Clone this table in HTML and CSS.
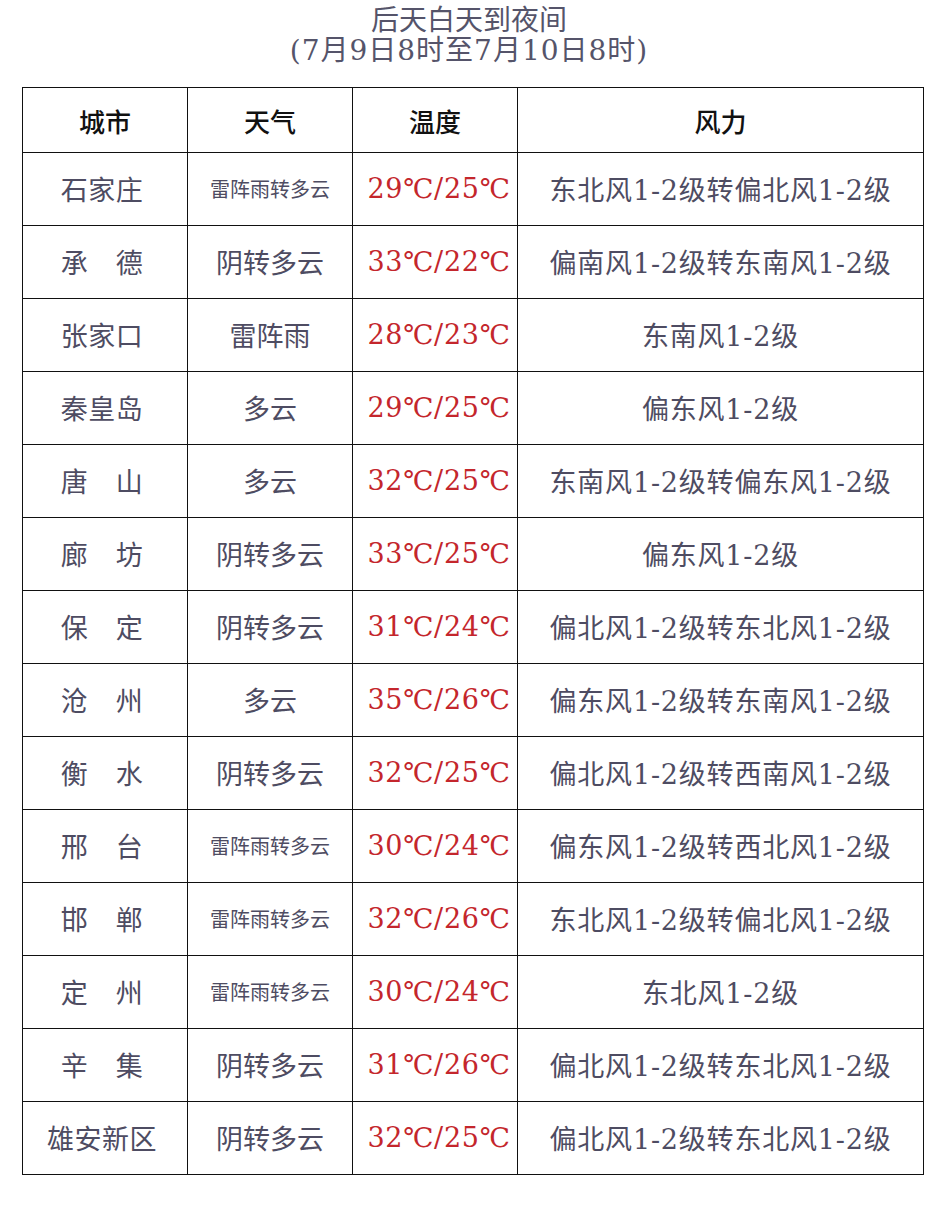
FILE: index.html
```html
<!DOCTYPE html>
<html lang="zh">
<head>
<meta charset="utf-8">
<link rel="stylesheet" href="styles.css">
</head>
<body>
<div class="title">
  <div class="t1">后天白天到夜间</div>
  <div class="t2">(7月9日8时至7月10日8时)</div>
</div>
<table class="wx">
  <colgroup><col class="c1"><col class="c2"><col class="c3"><col class="c4"></colgroup>
  <thead>
    <tr><th>城市</th><th>天气</th><th>温度</th><th>风力</th></tr>
  </thead>
  <tbody>
    <tr><td class="city">石家庄</td><td class="sm">雷阵雨转多云</td><td class="temp">29℃/25℃</td><td class="wind">东北风1-2级转偏北风1-2级</td></tr>
    <tr><td class="city">承　德</td><td>阴转多云</td><td class="temp">33℃/22℃</td><td class="wind">偏南风1-2级转东南风1-2级</td></tr>
    <tr><td class="city">张家口</td><td>雷阵雨</td><td class="temp">28℃/23℃</td><td class="wind">东南风1-2级</td></tr>
    <tr><td class="city">秦皇岛</td><td>多云</td><td class="temp">29℃/25℃</td><td class="wind">偏东风1-2级</td></tr>
    <tr><td class="city">唐　山</td><td>多云</td><td class="temp">32℃/25℃</td><td class="wind">东南风1-2级转偏东风1-2级</td></tr>
    <tr><td class="city">廊　坊</td><td>阴转多云</td><td class="temp">33℃/25℃</td><td class="wind">偏东风1-2级</td></tr>
    <tr><td class="city">保　定</td><td>阴转多云</td><td class="temp">31℃/24℃</td><td class="wind">偏北风1-2级转东北风1-2级</td></tr>
    <tr><td class="city">沧　州</td><td>多云</td><td class="temp">35℃/26℃</td><td class="wind">偏东风1-2级转东南风1-2级</td></tr>
    <tr><td class="city">衡　水</td><td>阴转多云</td><td class="temp">32℃/25℃</td><td class="wind">偏北风1-2级转西南风1-2级</td></tr>
    <tr><td class="city">邢　台</td><td class="sm">雷阵雨转多云</td><td class="temp">30℃/24℃</td><td class="wind">偏东风1-2级转西北风1-2级</td></tr>
    <tr><td class="city">邯　郸</td><td class="sm">雷阵雨转多云</td><td class="temp">32℃/26℃</td><td class="wind">东北风1-2级转偏北风1-2级</td></tr>
    <tr><td class="city">定　州</td><td class="sm">雷阵雨转多云</td><td class="temp">30℃/24℃</td><td class="wind">东北风1-2级</td></tr>
    <tr><td class="city">辛　集</td><td>阴转多云</td><td class="temp">31℃/26℃</td><td class="wind">偏北风1-2级转东北风1-2级</td></tr>
    <tr><td class="city">雄安新区</td><td>阴转多云</td><td class="temp">32℃/25℃</td><td class="wind">偏北风1-2级转东北风1-2级</td></tr>
  </tbody>
</table>
</body>
</html>
```
FILE: styles.css
```css
html, body {
  margin: 0;
  padding: 0;
  background: #ffffff;
}
body {
  font-family: "DejaVu Serif", "Noto Sans CJK SC", serif;
  color: #4e4c62;
}
.title {
  text-align: center;
  padding-top: 6px;
  color: #55546a;
  font-size: 28px;
  line-height: 30px;
  margin-left: -4px;
}
.title .t2 {
  letter-spacing: 1px;
}
.wx {
  margin: 21px 0 0 22px;
  border-collapse: collapse;
  width: 901px;
  table-layout: fixed;
}
.c1, .c2, .c3 { width: 165px; }
.c4 { width: 406px; }
.wx th, .wx td {
  border: 1.5px solid #111111;
  text-align: center;
  padding: 0;
  font-size: 27px;
  font-weight: normal;
}
.wx th {
  height: 64px;
  color: #111111;
  font-weight: 500;
  font-size: 26px;
}
.wx td {
  height: 70px;
  padding-bottom: 2px;
}
.wx td.city {
  letter-spacing: 0.5px;
  padding-right: 6px;
}
.wx td.sm {
  font-size: 20px;
}
.wx td.temp {
  color: #c4262c;
  letter-spacing: 0.7px;
  padding-left: 8px;
}
.wx td.wind {
  letter-spacing: 0.8px;
}
```
